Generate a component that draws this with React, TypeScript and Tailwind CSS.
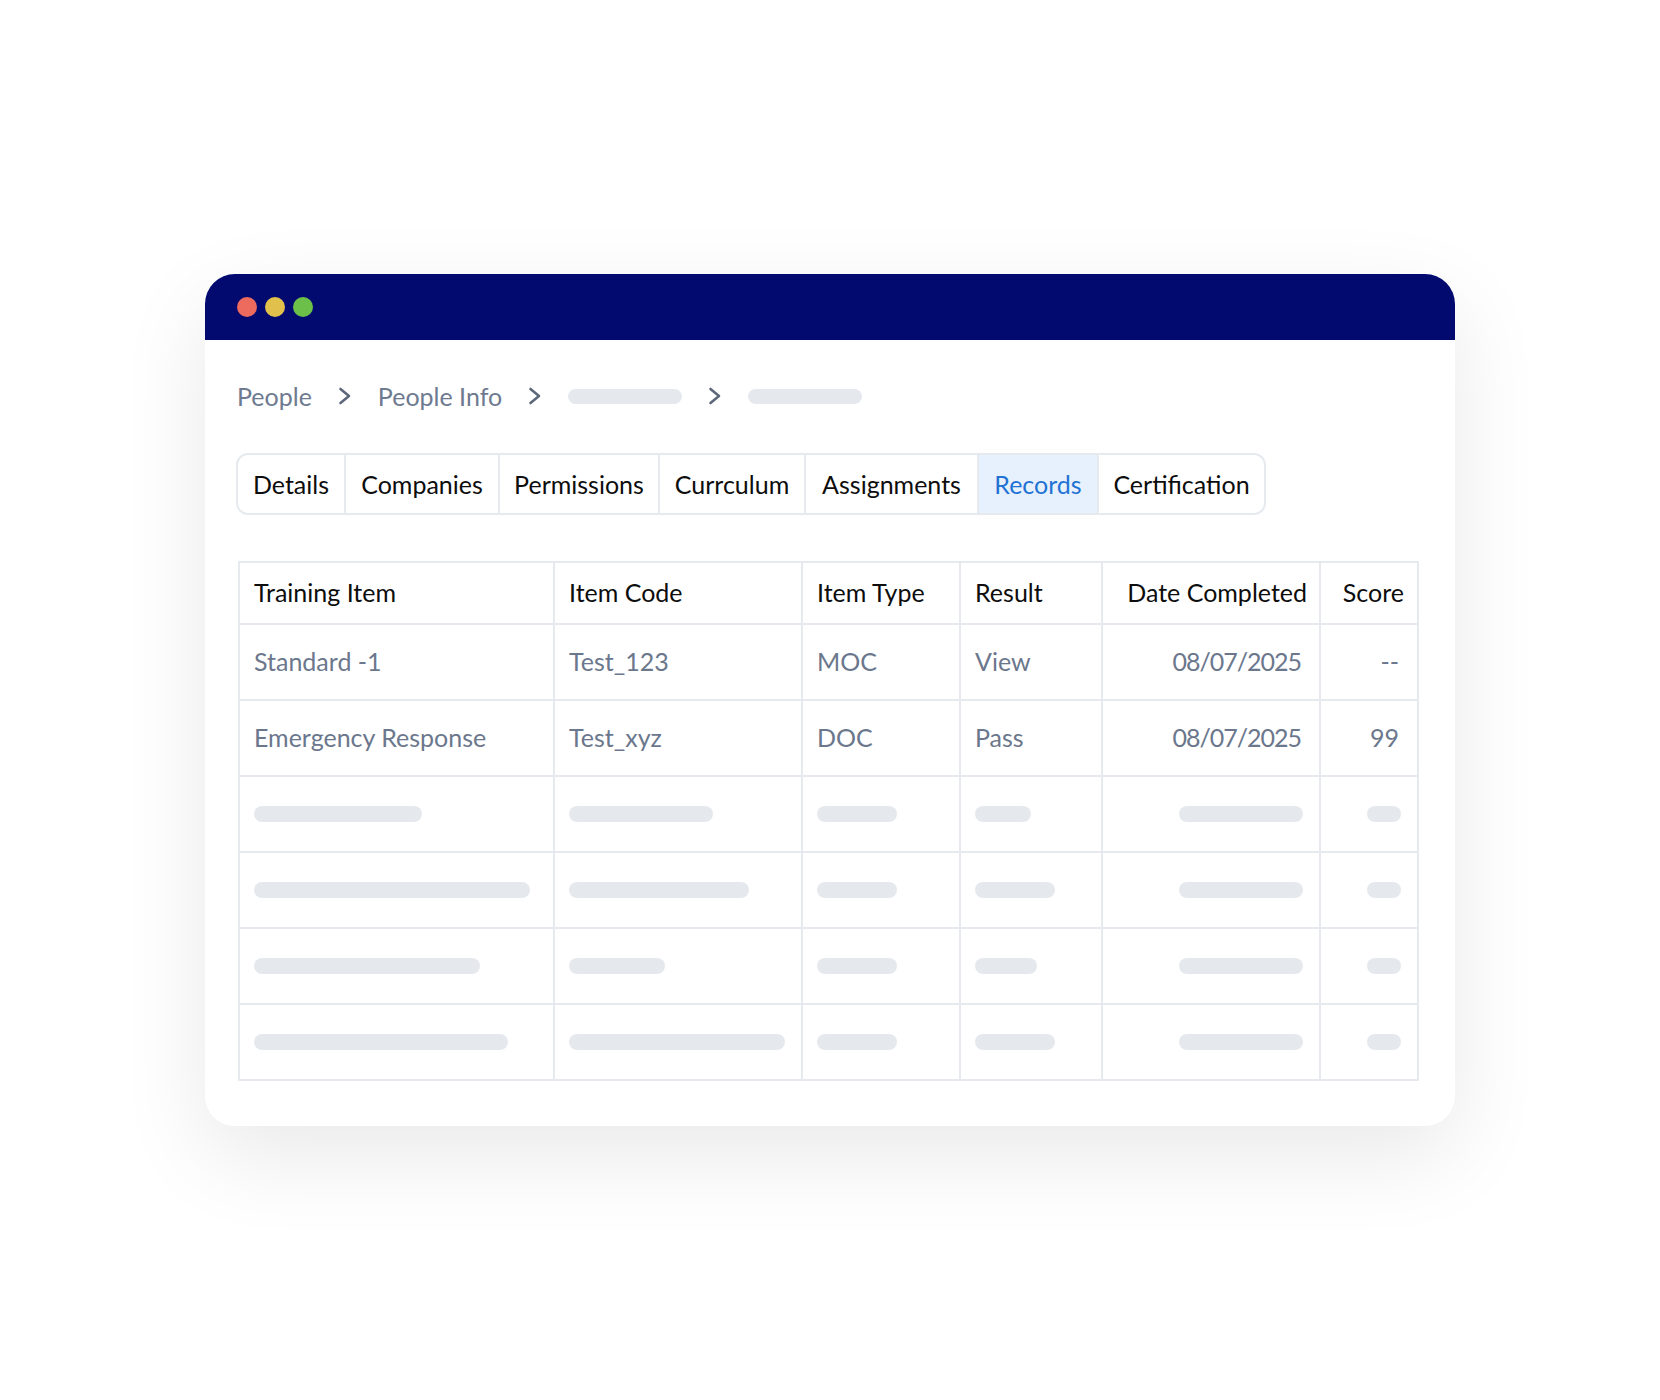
import React from "react";

const Chevron = () => (
  <svg width="14" height="18" viewBox="0 0 14 18" fill="none" className="shrink-0">
    <polyline points="2.5,2 11,9 2.5,16" stroke="#5d687a" strokeWidth="2.6" strokeLinecap="round" strokeLinejoin="round" />
  </svg>
);

const Bar = ({ w }: { w: number }) => (
  <div className="h-[16px] rounded-full bg-[#e5e9ee]" style={{ width: w }} />
);

const tabs = [
  { label: "Details", w: 108 },
  { label: "Companies", w: 154 },
  { label: "Permissions", w: 160 },
  { label: "Currculum", w: 146 },
  { label: "Assignments", w: 173 },
  { label: "Records", w: 120, active: true },
  { label: "Certification", w: 167 },
];

const skeletonRows = [
  [168, 144, 80, 56, 124, 34],
  [276, 180, 80, 80, 124, 34],
  [226, 96, 80, 62, 124, 34],
  [254, 216, 80, 80, 124, 34],
];

export default function App() {
  const cell = "border-2 border-[#e6eaef] h-[76px] align-middle";
  return (
    <div
      className="min-h-[1400px] w-full bg-white flex items-center justify-center"
      style={{ fontFamily: "Lato, 'Noto Sans', sans-serif" }}
    >
      <div className="w-[1250px] h-[852px] bg-white rounded-[30px] shadow-[0_30px_90px_rgba(0,0,0,0.09)] flex flex-col overflow-hidden">
        <div className="h-[66px] bg-[#020a70] flex items-center gap-[8px] pl-[32px] shrink-0">
          <div className="w-[20px] h-[20px] rounded-full bg-[#ec6a5e]" />
          <div className="w-[20px] h-[20px] rounded-full bg-[#e1c04c]" />
          <div className="w-[20px] h-[20px] rounded-full bg-[#6cc04a]" />
        </div>
        <div className="flex flex-col pl-[31px] pr-[35px] pt-[40px]">
          <div className="flex items-center gap-[26px] h-[32px] text-[25px] text-[#6e7a8f] leading-none">
            <span className="pl-[1px]">People</span>
            <Chevron />
            <span>People Info</span>
            <Chevron />
            <div className="w-[114px] h-[15px] rounded-full bg-[#e5e9ee]" />
            <Chevron />
            <div className="w-[114px] h-[15px] rounded-full bg-[#e5e9ee]" />
          </div>
          <div className="mt-[41px] flex self-start h-[62px] border-2 border-[#e6eaef] rounded-[12px] overflow-hidden">
            {tabs.map((t, i) => (
              <div
                key={t.label}
                className={
                  "flex items-center justify-center text-[25px] leading-none " +
                  (i > 0 ? "border-l-2 border-[#e6eaef] " : "") +
                  (t.active ? "bg-[#e6f1fd] text-[#2271d4]" : "text-[#0d0d0d]")
                }
                style={{ width: i === 0 ? t.w - 2 : t.w }}
              >
                {t.label}
              </div>
            ))}
          </div>
          <table className="mt-[46px] ml-[2px] table-fixed border-collapse w-[1181px] text-[25px]">
            <colgroup>
              <col className="w-[315px]" />
              <col className="w-[248px]" />
              <col className="w-[158px]" />
              <col className="w-[142px]" />
              <col className="w-[218px]" />
              <col className="w-[98px]" />
            </colgroup>
            <thead>
              <tr className="text-[#0d0d0d]">
                <th className="border-2 border-[#e6eaef] h-[62px] text-left font-normal pl-[14px]">Training Item</th>
                <th className="border-2 border-[#e6eaef] h-[62px] text-left font-normal pl-[14px]">Item Code</th>
                <th className="border-2 border-[#e6eaef] h-[62px] text-left font-normal pl-[14px]">Item Type</th>
                <th className="border-2 border-[#e6eaef] h-[62px] text-left font-normal pl-[14px]">Result</th>
                <th className="border-2 border-[#e6eaef] h-[62px] text-right font-normal pr-[12px] whitespace-nowrap">Date Completed</th>
                <th className="border-2 border-[#e6eaef] h-[62px] text-right font-normal pr-[13px]">Score</th>
              </tr>
            </thead>
            <tbody className="text-[#6b778c]">
              <tr>
                <td className={cell + " pl-[14px]"}>Standard -1</td>
                <td className={cell + " pl-[14px]"}>Test_123</td>
                <td className={cell + " pl-[14px]"}>MOC</td>
                <td className={cell + " pl-[14px]"}>View</td>
                <td className={cell + " text-right pr-[18px] tracking-[-1px]"}>08/07/2025</td>
                <td className={cell + " text-right pr-[18px]"}>--</td>
              </tr>
              <tr>
                <td className={cell + " pl-[14px]"}>Emergency Response</td>
                <td className={cell + " pl-[14px]"}>Test_xyz</td>
                <td className={cell + " pl-[14px]"}>DOC</td>
                <td className={cell + " pl-[14px]"}>Pass</td>
                <td className={cell + " text-right pr-[18px] tracking-[-1px]"}>08/07/2025</td>
                <td className={cell + " text-right pr-[18px]"}>99</td>
              </tr>
              {skeletonRows.map((r, ri) => (
                <tr key={ri}>
                  {r.map((w, ci) => (
                    <td key={ci} className={cell + (ci >= 4 ? " pr-[16px]" : " pl-[14px]")}>
                      <div className={"flex " + (ci >= 4 ? "justify-end" : "justify-start")}>
                        <Bar w={w} />
                      </div>
                    </td>
                  ))}
                </tr>
              ))}
            </tbody>
          </table>
        </div>
      </div>
    </div>
  );
}
